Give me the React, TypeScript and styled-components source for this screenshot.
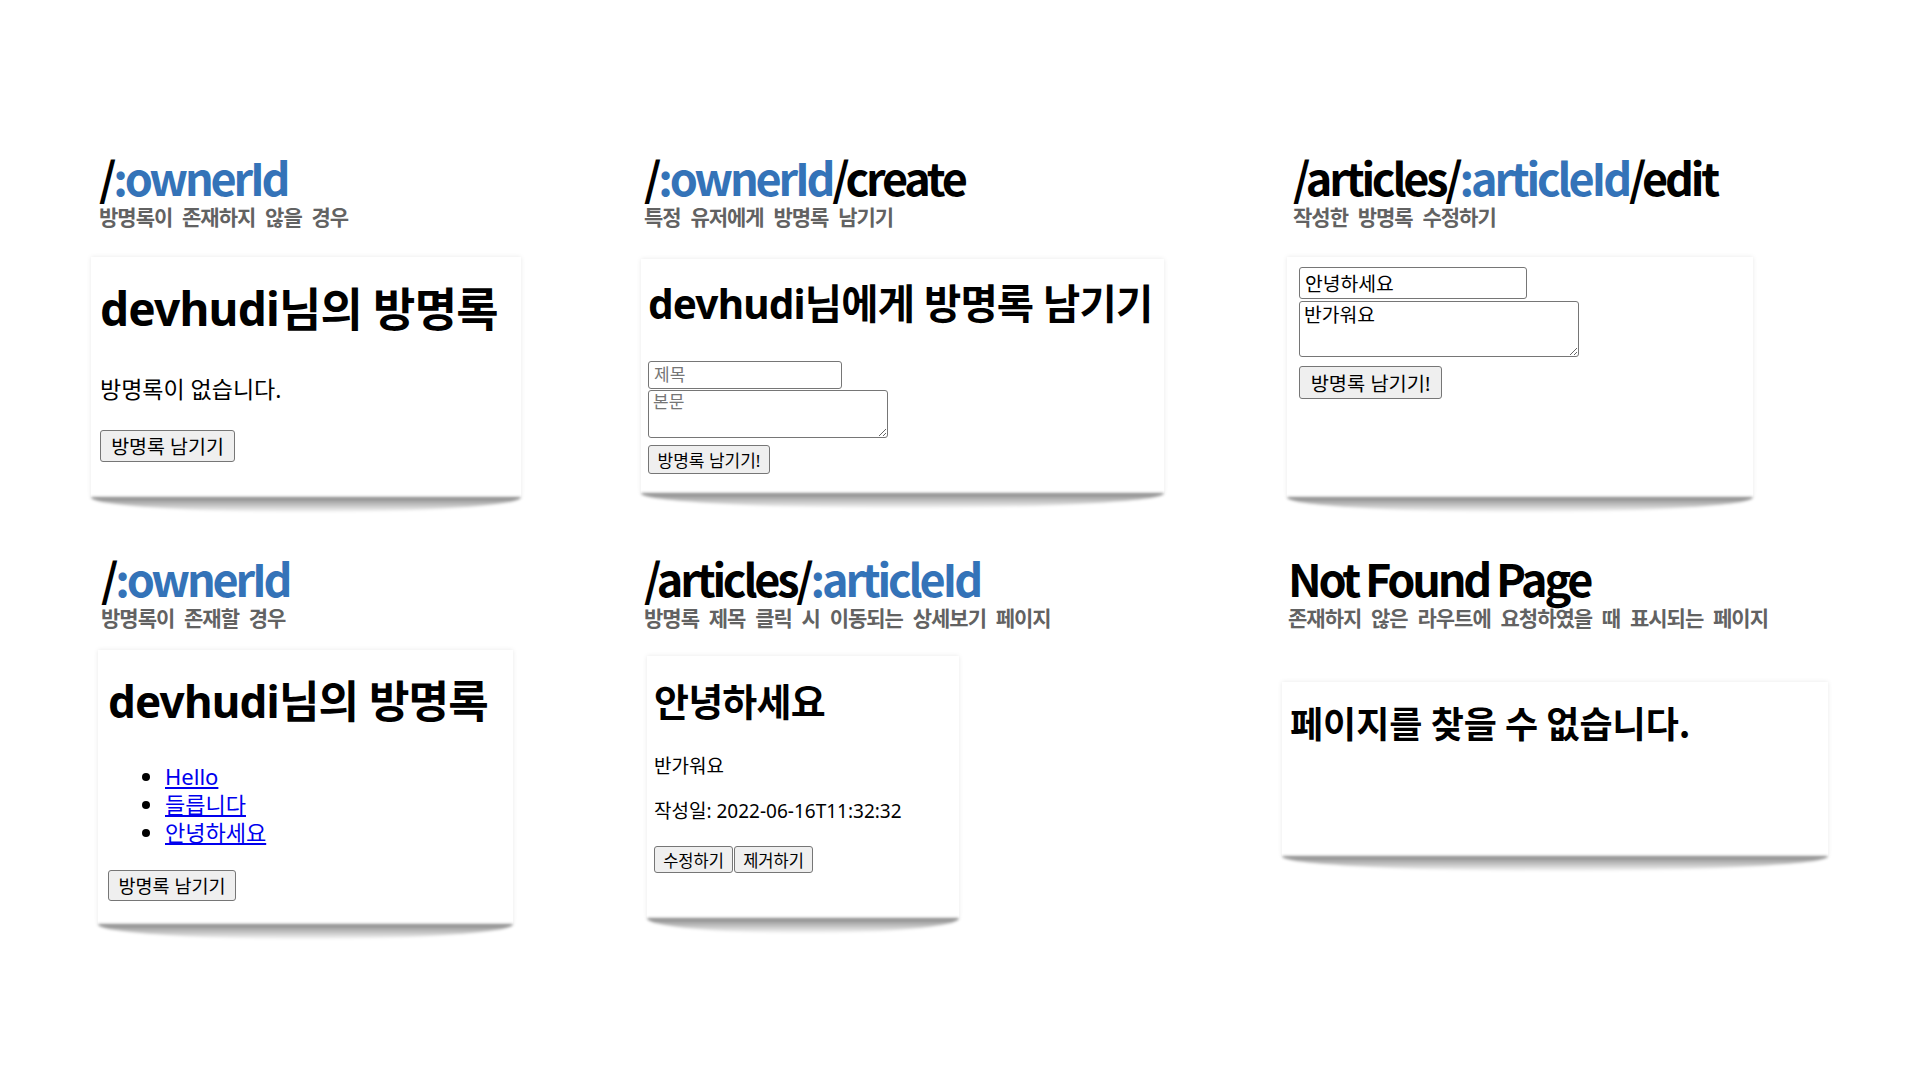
import React from "react";
import styled, { createGlobalStyle } from "styled-components";

const GlobalStyle = createGlobalStyle`
  html, body { margin: 0; padding: 0; background: #ffffff; }
  body { font-family: "Noto Sans", "Noto Sans CJK KR", sans-serif; color: #000; }
  * { box-sizing: border-box; }
`;

const Page = styled.main`
  width: 1920px;
  height: 1080px;
  padding: 152px 0 0 90px;
  display: grid;
  grid-template-columns: 550px 640px 1fr;
  grid-template-rows: 401px 401px;
`;

const Cell = styled.section`
  display: flex;
  flex-direction: column;
  align-items: flex-start;
`;

const Header = styled.header<{ $indent: number }>`
  margin-left: ${(p) => p.$indent}px;
`;

const Route = styled.h2`
  margin: 0;
  font-family: "Noto Sans CJK KR", sans-serif;
  font-weight: 700;
  font-size: 45px;
  line-height: 50px;
  letter-spacing: -3.2px;
  white-space: nowrap;
  color: #000;
`;

const Param = styled.span`
  color: #3473b8;
`;

const Caption = styled.p`
  margin: 2px 0 0;
  font-family: "Noto Sans CJK KR", sans-serif;
  font-weight: 700;
  font-size: 21px;
  line-height: 24px;
  letter-spacing: -1px;
  word-spacing: 6px;
  color: #626262;
  white-space: nowrap;
`;

const Card = styled.div<{ $x: number; $y: number; $w: number; $h: number; $pad: number }>`
  position: relative;
  margin-left: ${(p) => p.$x}px;
  margin-top: ${(p) => p.$y}px;
  width: ${(p) => p.$w}px;
  height: ${(p) => p.$h}px;
  padding: 0 0 0 ${(p) => p.$pad}px;
  background: #fff;
  box-shadow: 0 0 5px rgba(0, 0, 0, 0.09);
  &::after {
    content: "";
    position: absolute;
    left: 0;
    right: 0;
    top: 100%;
    height: 15px;
    border-radius: 0 0 50% 50% / 0 0 100% 100%;
    background: linear-gradient(to bottom, rgba(0, 0, 0, 0.47), rgba(0, 0, 0, 0.03));
    filter: blur(1.5px);
  }
`;

const Heading = styled.h1<{ $size: number; $top: number; $cjk?: boolean }>`
  margin: ${(p) => p.$top}px 0 0;
  font-family: ${(p) => (p.$cjk ? '"Noto Sans CJK KR", sans-serif' : '"Noto Sans", "Noto Sans CJK KR", sans-serif')};
  font-size: ${(p) => p.$size}px;
  line-height: ${(p) => p.$size * 1.2}px;
  font-weight: 700;
  letter-spacing: ${(p) => (p.$cjk ? 0 : -0.8)}px;
  white-space: nowrap;
`;

const Text = styled.p<{ $size: number; $top: number }>`
  margin: ${(p) => p.$top}px 0 0;
  font-size: ${(p) => p.$size}px;
  line-height: ${(p) => p.$size * 1.2}px;
  white-space: nowrap;
`;

const Button = styled.button<{ $w: number; $h: number; $size: number; $top?: number }>`
  display: block;
  margin: ${(p) => p.$top ?? 0}px 0 0;
  width: ${(p) => p.$w}px;
  height: ${(p) => p.$h}px;
  padding: 0;
  font-family: "Noto Sans", "Noto Sans CJK KR", sans-serif;
  font-size: ${(p) => p.$size}px;
  color: #000;
  background: #efefef;
  border: 1px solid #767676;
  border-radius: 3px;
  white-space: nowrap;
`;

const ButtonRow = styled.div<{ $top: number }>`
  display: flex;
  gap: 1px;
  margin-top: ${(p) => p.$top}px;
`;

const Field = styled.input<{ $w: number; $h: number; $size: number; $top: number }>`
  display: block;
  margin: ${(p) => p.$top}px 0 0;
  width: ${(p) => p.$w}px;
  height: ${(p) => p.$h}px;
  padding: 0 5px;
  font-family: "Noto Sans", "Noto Sans CJK KR", sans-serif;
  font-size: ${(p) => p.$size}px;
  color: #000;
  border: 1px solid #767676;
  border-radius: 3px;
  background: #fff;
  &::placeholder { color: #757575; }
`;

const Area = styled.textarea<{ $w: number; $h: number; $size: number; $top: number }>`
  display: block;
  margin: ${(p) => p.$top}px 0 0;
  width: ${(p) => p.$w}px;
  height: ${(p) => p.$h}px;
  padding: 1px 4px;
  font-family: "Noto Sans", "Noto Sans CJK KR", sans-serif;
  font-size: ${(p) => p.$size}px;
  line-height: 1.2;
  color: #000;
  border: 1px solid #767676;
  border-radius: 3px;
  background: #fff;
  &::placeholder { color: #757575; }
`;

const List = styled.ul<{ $top: number }>`
  margin: ${(p) => p.$top}px 0 0;
  padding-left: 57px;
  font-size: 22px;
  line-height: 28px;
`;

const Item = styled.li``;

const Link = styled.a`
  color: #0000ee;
  text-decoration: underline;
`;

export default function App() {
  return (
    <>
      <GlobalStyle />
      <Page>
        <Cell>
          <Header $indent={9}>
            <Route>/<Param>:ownerId</Param></Route>
            <Caption>방명록이 존재하지 않을 경우</Caption>
          </Header>
          <Card $x={1} $y={29} $w={430} $h={240} $pad={9}>
            <Heading $size={46} $top={24}>devhudi님의 방명록</Heading>
            <Text $size={23} $top={40}>방명록이 없습니다.</Text>
            <Button $w={135} $h={32} $size={19.5} $top={26}>방명록 남기기</Button>
          </Card>
        </Cell>

        <Cell>
          <Header $indent={4}>
            <Route>/<Param>:ownerId</Param>/create</Route>
            <Caption>특정 유저에게 방명록 남기기</Caption>
          </Header>
          <Card $x={1} $y={31} $w={523} $h={234} $pad={7}>
            <Heading $size={40.5} $top={21}>devhudi님에게 방명록 남기기</Heading>
            <Field $w={194} $h={28} $size={17} $top={32} placeholder="제목" />
            <Area $w={240} $h={48} $size={17} $top={1} placeholder="본문" />
            <Button $w={122} $h={29} $size={17} $top={7}>방명록 남기기!</Button>
          </Card>
        </Cell>

        <Cell>
          <Header $indent={13}>
            <Route>/articles/<Param>:articleId</Param>/edit</Route>
            <Caption>작성한 방명록 수정하기</Caption>
          </Header>
          <Card $x={7} $y={29} $w={466} $h={240} $pad={12}>
            <Field $w={228} $h={32} $size={19.3} $top={10} defaultValue="안녕하세요" />
            <Area $w={280} $h={56} $size={19.3} $top={2} defaultValue="반가워요" />
            <Button $w={143} $h={33} $size={19.8} $top={9}>방명록 남기기!</Button>
          </Card>
        </Cell>

        <Cell>
          <Header $indent={11}>
            <Route>/<Param>:ownerId</Param></Route>
            <Caption>방명록이 존재할 경우</Caption>
          </Header>
          <Card $x={8} $y={21} $w={415} $h={274} $pad={10}>
            <Heading $size={44} $top={25}>devhudi님의 방명록</Heading>
            <List $top={34}>
              <Item><Link href="#">Hello</Link></Item>
              <Item><Link href="#">들릅니다</Link></Item>
              <Item><Link href="#">안녕하세요</Link></Item>
            </List>
            <Button $w={128} $h={31} $size={18.5} $top={24}>방명록 남기기</Button>
          </Card>
        </Cell>

        <Cell>
          <Header $indent={4}>
            <Route>/articles/<Param>:articleId</Param></Route>
            <Caption>방명록 제목 클릭 시 이동되는 상세보기 페이지</Caption>
          </Header>
          <Card $x={7} $y={27} $w={312} $h={262} $pad={7}>
            <Heading $size={38} $top={23}>안녕하세요</Heading>
            <Text $size={19} $top={30}>반가워요</Text>
            <Text $size={19} $top={23}>작성일: 2022-06-16T11:32:32</Text>
            <ButtonRow $top={23}>
              <Button $w={79} $h={27} $size={16.5}>수정하기</Button>
              <Button $w={79} $h={27} $size={16.5}>제거하기</Button>
            </ButtonRow>
          </Card>
        </Cell>

        <Cell>
          <Header $indent={8}>
            <Route>Not Found Page</Route>
            <Caption>존재하지 않은 라우트에 요청하였을 때 표시되는 페이지</Caption>
          </Header>
          <Card $x={2} $y={53} $w={546} $h={174} $pad={8}>
            <Heading $size={36} $top={19} $cjk>페이지를 찾을 수 없습니다.</Heading>
          </Card>
        </Cell>
      </Page>
    </>
  );
}
